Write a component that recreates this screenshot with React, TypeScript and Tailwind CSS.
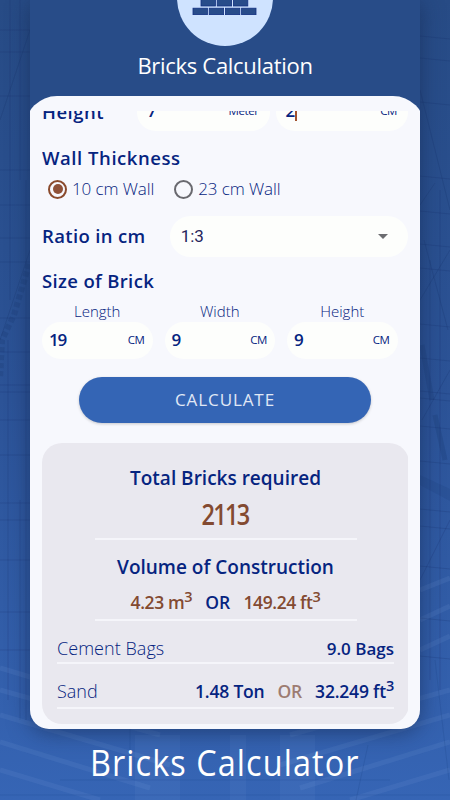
import { ReactNode } from "react";
import clsx from "clsx";

interface PillProps {
	value: string;
	unit: string;
	className?: string;
	focused?: boolean;
}

function Pill({ value, unit, className, focused }: PillProps) {
	return (
		<div className={clsx("flex h-[37px] items-center justify-between rounded-full bg-[#fdfefc]", className)}>
			<span className="flex items-center text-[17px] font-semibold tracking-[-1.2px]">
				{value}
				{focused && <span className="mt-[2px] ml-px h-[18px] w-[2px] bg-[#a1522f]" />}
			</span>
			<span className="text-[11.5px] font-medium tracking-[-0.4px]">{unit}</span>
		</div>
	);
}

function Radio({ label, checked }: { label: string; checked?: boolean }) {
	return (
		<label className="flex items-center gap-[5px]">
			<span
				className={clsx(
					"flex size-[19px] items-center justify-center rounded-full border-2",
					checked ? "border-[#8a4a2c]" : "border-[#69696f]"
				)}
			>
				{checked && <span className="size-[10px] rounded-full bg-[#8f5138]" />}
			</span>
			<span className="text-[17px] font-light tracking-[-0.1px] whitespace-nowrap">{label}</span>
		</label>
	);
}

function Cubed({ children }: { children: ReactNode }) {
	return (
		<span className="whitespace-nowrap">
			{children}
			<span className="relative -top-[7px] text-[14.5px] leading-none">3</span>
		</span>
	);
}

// Faint construction site lines behind the phone
function Scaffold() {
	const rows = [30, 52, 96, 170, 205, 238, 262, 318, 352, 385, 392, 420, 455, 503, 520, 560, 612, 650];
	return (
		<svg className="absolute inset-0 h-full w-full" viewBox="0 0 450 800" fill="none">
			<g stroke="#132f66" strokeOpacity="0.2">
				{rows.map((y) => (
					<path key={y} d={`M0 ${y}h30M420 ${y + 6}l30 3`} />
				))}
				<path d="M10 0v300M20 0v180M8 340v360M20 500v220M26 180v540M440 190v500M430 260v420" />
				<path d="M420 90l30 120M424 240l24 90M420 205l15-22M420 300l30-50M422 420l28-50M420 580l30-60M0 340l30-90M0 120l30-90" />
			</g>
			<path d="M29 264L14 315 2 340 0 378" stroke="#17366f" strokeOpacity="0.25" strokeWidth="6" strokeDasharray="5 3" />
			<path d="M422 345l10 55M435 415l10 45" stroke="#17366f" strokeOpacity="0.25" strokeWidth="5" />
			<path d="M420 485l30 16v-12l-30-14z" fill="#17366f" fillOpacity="0.15" />
			<g stroke="#6f93d6" strokeOpacity="0.16" strokeWidth="5">
				<path d="M0 690l160 45M0 715l170 50M0 742l150 46M0 770l100 30M0 668l60 18" />
				<path d="M450 690l-160 45M450 715l-170 50M450 742l-150 46M450 770l-100 30M420 590l30-12M420 620l30-14M420 650l30-14" />
			</g>
			<path d="M135 735h45v65h-45zM230 735h16v65h-16zM280 735h35v65h-35z" fill="#7799dc" fillOpacity="0.1" />
			<path d="M0 795h450M60 780h330M130 680v90M435 660l14 120M368 745l-12 55" stroke="#1b3f83" strokeOpacity="0.2" />
		</svg>
	);
}

function BrickLogo() {
	return (
		<svg className="h-4 w-[66px]" viewBox="0 0 66 16" fill="#284c8a" stroke="#123080" strokeWidth="0.8">
			{[9, 25.2, 41.4].map((x) => (
				<rect key={x} x={x} y="-1" width="14.4" height="7" />
			))}
			{[1, 17.2, 33.4, 49.6].map((x) => (
				<rect key={x} x={x} y="8.2" width="14.4" height="6.4" />
			))}
		</svg>
	);
}

export default function App() {
	const sizes = [
		{ label: "Length", value: "19" },
		{ label: "Width", value: "9" },
		{ label: "Height", value: "9" },
	];

	return (
		<main className="relative flex h-[800px] w-[450px] flex-col items-center overflow-hidden bg-linear-to-b from-[#274b85] via-[#2c5397] to-[#3665b5] font-['Open_Sans','Noto_Sans',sans-serif] text-[#062480]">
			<Scaffold />

			<section className="relative h-[729px] w-[390px] shrink-0 overflow-hidden rounded-b-[19px] bg-[#284c88] shadow-[0_3px_22px_rgba(20,40,80,0.6)]">
				<header className="flex h-[96px] flex-col items-center">
					<div className="-mt-[50px] flex h-[96px] w-[96px] shrink-0 justify-center rounded-full bg-[#cfe3ff] pt-[50px]">
						<BrickLogo />
					</div>
					<h1 className="mt-[4px] text-[22px] leading-[30px] tracking-[-0.3px] whitespace-nowrap text-white">Bricks Calculation</h1>
				</header>

				<div className="-mx-[5px] h-[633px] rounded-t-[32px] bg-[#f7f8fd] px-[17px] pt-[15px]">
					<div className="h-[618px] overflow-hidden">
						<div className="-mt-[17px] flex h-[37px] items-center">
							<span className="w-[95px] shrink-0 pb-[2px] text-[18.5px] font-semibold tracking-[0.5px]">Height</span>
							<Pill value="7" unit="Meter" className="w-[133px] pr-[11px] pb-[3px] pl-[10px]" />
							<Pill value="2" unit="CM" focused className="ml-[6px] w-[133px] pr-[11px] pb-[3px] pl-[10px]" />
						</div>

						<h2 className="mt-[14px] text-[18.5px] leading-[26px] font-semibold tracking-[0.55px]">Wall Thickness</h2>
						<div className="mt-[5px] flex h-[26px] items-center gap-[20px] pl-[6px]">
							<Radio label="10 cm Wall" checked />
							<Radio label="23 cm Wall" />
						</div>

						<div className="mt-[14px] flex h-[41px] items-center">
							<span className="w-[128px] pb-[2px] text-[18.5px] font-semibold tracking-[0.35px] whitespace-nowrap">Ratio in cm</span>
							<div className="flex h-[41px] w-[239px] items-center justify-between rounded-full bg-[#fdfefc] pr-[20px] pl-[11px]">
								<span className="font-[Roboto] text-[17px] text-[#25255c]">1:3</span>
								<svg width="10" height="5" viewBox="0 0 10 5" fill="#6c6c70">
									<path d="M0 0h10L5 5z" />
								</svg>
							</div>
						</div>

						<h2 className="mt-[11px] text-[18.5px] leading-[26px] font-semibold tracking-[0.35px]">Size of Brick</h2>
						<div className="mt-[6px] flex gap-[12px]">
							{sizes.map((size) => (
								<div key={size.label} className="w-[110.5px]">
									<p className="text-center text-[15px] leading-[22px] font-light">{size.label}</p>
									<Pill value={size.value} unit="CM" className="pr-[8px] pb-[2px] pl-[7px]" />
								</div>
							))}
						</div>

						<button className="mt-[18px] ml-[37px] flex h-[46px] w-[292px] items-center justify-center rounded-full bg-[#3465b5] text-[17px] tracking-[0.9px] text-[#e0e8f5] shadow-[0_1px_3px_rgba(0,0,0,0.2)]">
							CALCULATE
						</button>

						<div className="mt-[20px] flex h-[281px] w-[367px] flex-col items-center rounded-[20px] bg-[#e9e8ef] px-[15px] pt-[21px]">
							<h3 className="text-[19px] leading-[28px] font-semibold whitespace-nowrap">Total Bricks required</h3>
							<p className="mt-[3px] scale-x-[0.84] text-[28px] leading-[38px] font-semibold tracking-[-2px] text-[#834a31]">2113</p>
							<hr className="mt-[5px] w-[262px] border-t-2 border-[#f5f5fa]" />
							<h3 className="mt-[13px] text-[19px] leading-[28px] font-semibold whitespace-nowrap">Volume of Construction</h3>
							<p className="mt-[8px] flex h-[26px] items-center gap-[13px] text-[17.5px] leading-[26px] font-semibold tracking-[-0.4px] text-[#834a31]">
								<Cubed>4.23 m</Cubed>
								<span className="tracking-[0.2px] text-[#062480]">OR</span>
								<Cubed>149.24 ft</Cubed>
							</p>
							<hr className="mt-[4px] w-[262px] border-t-2 border-[#f5f5fa]" />

							<div className="mt-[14px] flex h-[29px] w-full items-center justify-between border-b-2 border-[#f5f5fa]">
								<span className="text-[18px] font-light tracking-[0.05px]">Cement Bags</span>
								<span className="text-[17px] font-semibold">9.0 Bags</span>
							</div>
							<div className="mt-[16px] flex h-[29px] w-full items-center border-b-2 border-[#f5f5fa] pb-[4px]">
								<span className="flex-1 text-[18px] font-light">Sand</span>
								<span className="flex gap-[13px] text-[17.5px] font-semibold tracking-[-0.2px] whitespace-nowrap">
									<span>1.48 Ton</span>
									<span className="text-[#9d7c72]">OR</span>
									<Cubed>32.249 ft</Cubed>
								</span>
							</div>
						</div>
					</div>
				</div>
			</section>

			<p className="relative mt-[9px] scale-x-[0.9] text-[36px] leading-[50px] tracking-[1.2px] whitespace-nowrap text-white">Bricks Calculator</p>
		</main>
	);
}
